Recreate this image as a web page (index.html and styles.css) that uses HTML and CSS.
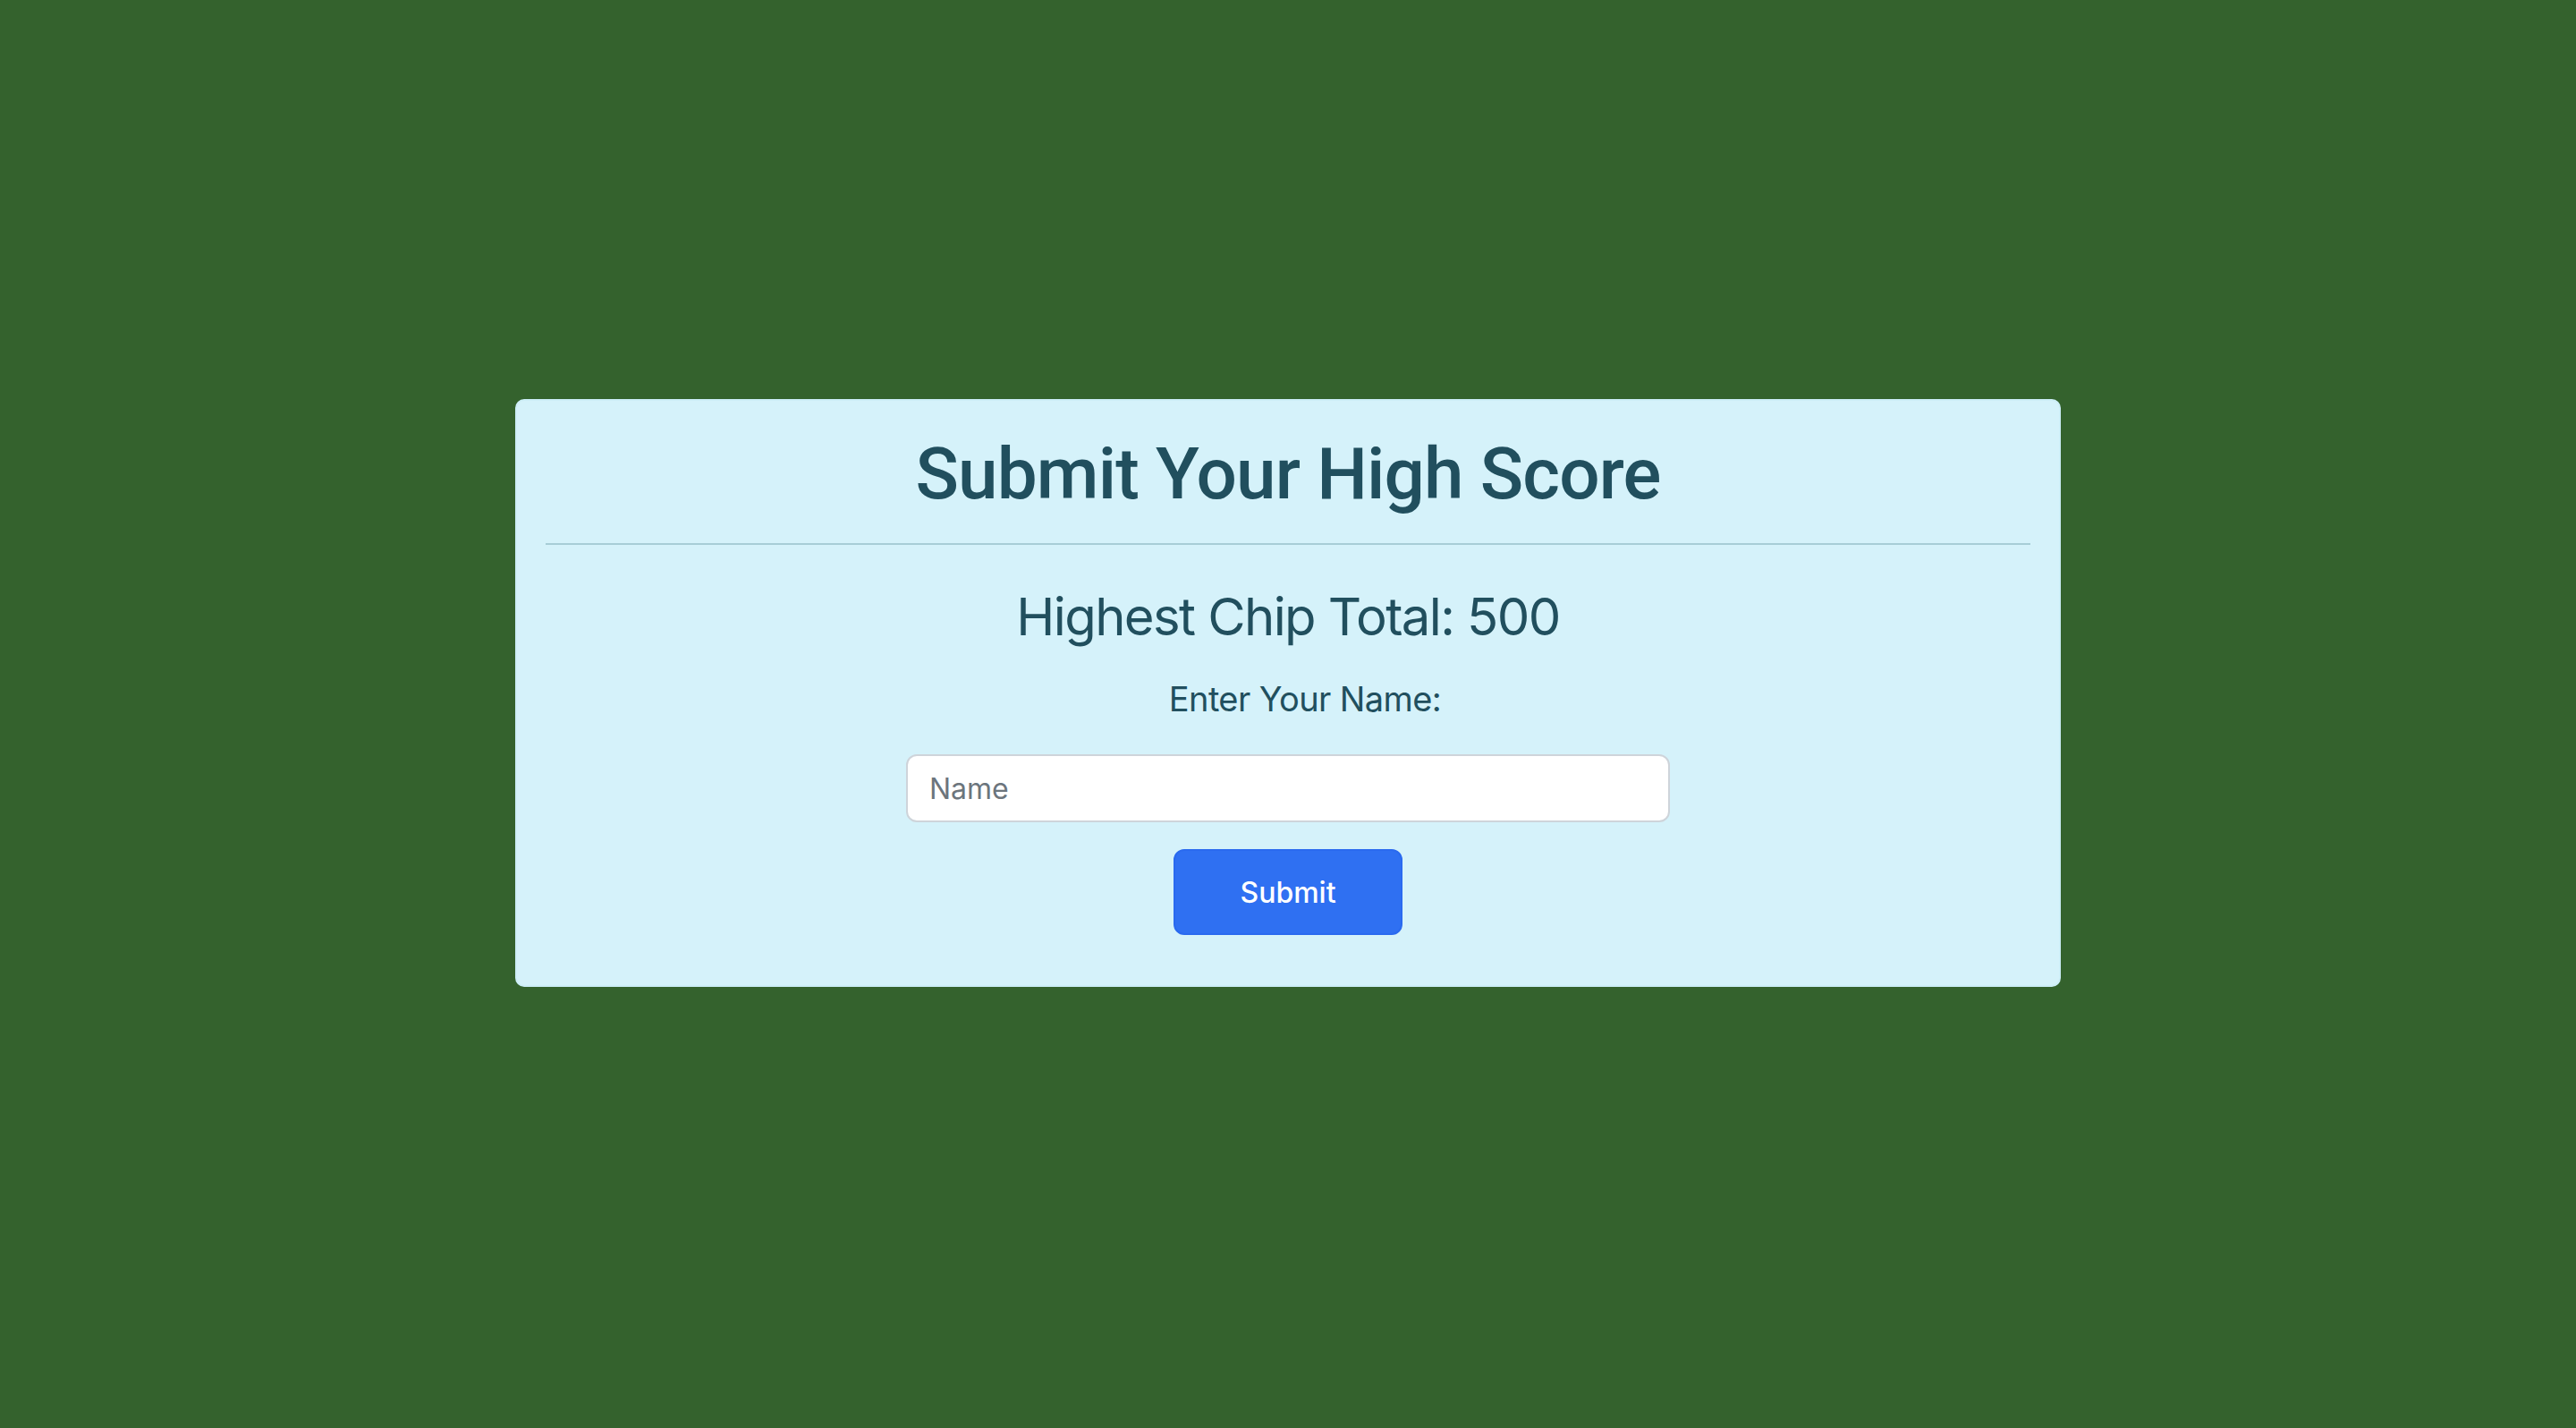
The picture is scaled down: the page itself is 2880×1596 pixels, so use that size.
FILE: index.html
```html
<!DOCTYPE html>
<html lang="en">
<head>
<meta charset="utf-8">
<title>Submit Your High Score</title>
<link rel="stylesheet" href="styles.css">
</head>
<body>
<main class="page">
  <section class="card">
    <h1 class="title">Submit Your High Score</h1>
    <hr class="divider">
    <h2 class="score">Highest Chip Total: 500</h2>
    <form class="form">
      <label class="label" for="name">Enter Your Name:</label>
      <input class="input" id="name" type="text" placeholder="Name">
      <button class="btn" type="button">Submit</button>
    </form>
  </section>
</main>
</body>
</html>
```
FILE: styles.css
```css
html, body {
  margin: 0;
  padding: 0;
}
body {
  background: #34622d;
  min-height: 1596px;
  font-family: Inter, "Noto Sans", sans-serif;
  color: #214f5e;
}
.page {
  padding-top: 446px;
  display: flex;
  justify-content: center;
}
.card {
  box-sizing: border-box;
  width: 1728px;
  height: 657px;
  background: #d5f2fa;
  border: 2px solid #cdeef7;
  border-radius: 10px;
  padding: 34px 32px 0;
  display: flex;
  flex-direction: column;
  align-items: center;
}
.title {
  margin: 0;
  font-family: Roboto, "Liberation Sans", Arial, sans-serif;
  font-weight: 500;
  font-size: 80px;
  line-height: 96px;
  letter-spacing: -0.85px;
  text-align: center;
  color: #214f5e;
}
.divider {
  align-self: stretch;
  margin: 29px 0 0;
  border: 0;
  height: 2px;
  background: #a7cdd6;
}
.score {
  margin: 44px 0 0;
  font-weight: 400;
  font-size: 58px;
  line-height: 72px;
  letter-spacing: -1.6px;
  text-align: center;
}
.form {
  display: flex;
  flex-direction: column;
  align-items: center;
}
.label {
  margin-top: 28px;
  padding-left: 38px;
  font-size: 38px;
  line-height: 57px;
  letter-spacing: -0.6px;
}
.input {
  box-sizing: border-box;
  margin-top: 33px;
  width: 854px;
  height: 76px;
  padding: 0 24px;
  border: 2px solid #ced4da;
  border-radius: 12px;
  background: #fff;
  font-family: Inter, "Noto Sans", sans-serif;
  font-size: 32px;
  color: #212529;
  outline: none;
}
.input::placeholder {
  color: #6c757d;
}
.btn {
  box-sizing: border-box;
  margin-top: 30px;
  width: 256px;
  height: 96px;
  border: 2px solid #2a6aef;
  border-radius: 12px;
  background: #2f70f2;
  color: #fff;
  font-family: Inter, "Noto Sans", sans-serif;
  font-size: 32px;
  font-weight: 500;
  cursor: pointer;
}
```
